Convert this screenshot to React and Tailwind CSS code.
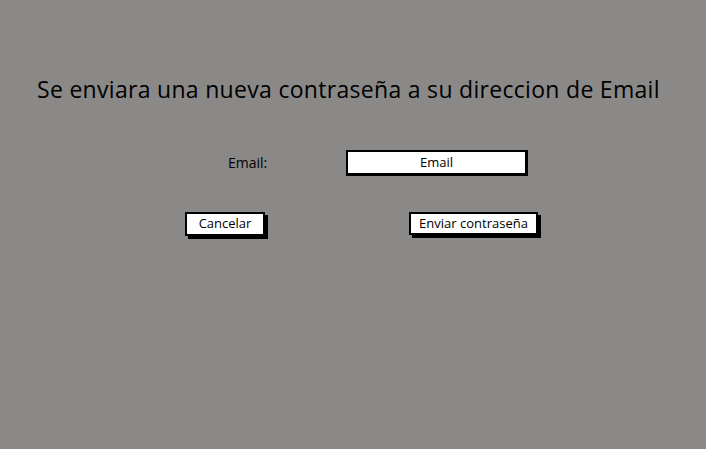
export default function App() {
  return (
    <div className="w-[706px] h-[449px] bg-[#8a8988] text-black overflow-hidden" style={{fontFamily: '"Open Sans", "Liberation Sans", sans-serif'}}>
      <div className="pt-[75px] pl-[37px] text-[23px] leading-[29px] whitespace-nowrap tracking-[0.3px]">
        Se enviara una nueva contraseña a su direccion de Email
      </div>
      <div className="flex items-center mt-[46px] h-[26px]">
        <div className="ml-[228px] w-[118px] text-[14px] leading-[18px]">Email:</div>
        <div className="w-[182px] h-[26px] bg-white border-2 border-black border-r-[3px] border-b-[3px] flex items-center justify-center text-[13px]">Email</div>
      </div>
      <div className="flex items-start mt-[36px]">
        <div className="ml-[185px] w-[80px] h-[24px] bg-white border-2 border-black shadow-[3px_3px_0_0_#000] flex items-center justify-center text-[13px]">Cancelar</div>
        <div className="ml-[144px] w-[129px] h-[23px] bg-white border-2 border-black shadow-[3px_3px_0_0_#000] flex items-center justify-center text-[13px]">Enviar contraseña</div>
      </div>
    </div>
  );
}
